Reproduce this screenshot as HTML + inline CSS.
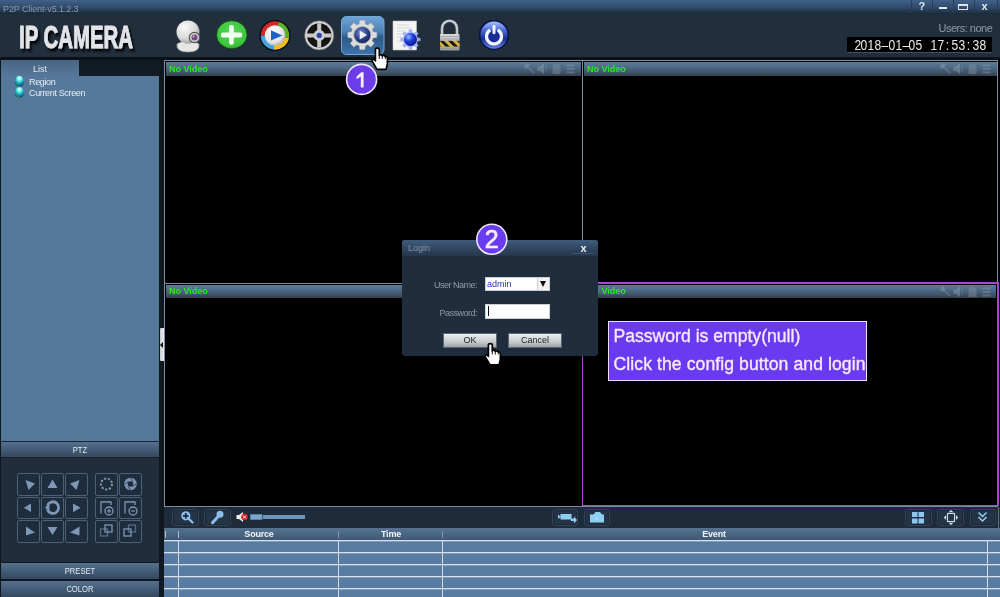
<!DOCTYPE html>
<html><head><meta charset="utf-8">
<style>
*{margin:0;padding:0;box-sizing:border-box}
html,body{width:1000px;height:597px;overflow:hidden;background:#1b2838;font-family:"Liberation Sans",sans-serif}
body{will-change:transform}
.a{position:absolute}
#title{left:0;top:0;width:1000px;height:14px;background:linear-gradient(#40618a,#2f4a6a 55%,#23374e 82%,#1b2939)}
#title .t{left:3px;top:4px;font-size:9px;line-height:10px;color:#8c9aaa;letter-spacing:-0.1px}
.wsep{top:0;width:1px;height:13px;background:#2a3f57}
#hdr{left:0;top:14px;width:1000px;height:43px;background:#212e3c}
#blk{left:0;top:57px;width:1000px;height:3px;background:#0b1118}
#logo{left:19px;top:19px;font-size:31px;font-weight:bold;color:#e4e6ea;transform:scaleX(0.655);transform-origin:0 0;text-shadow:2px 2px 2px #000;line-height:34px;letter-spacing:0.5px}
#users{left:938.5px;top:22px;font-size:11px;color:#8e9aa8;letter-spacing:-0.5px;line-height:13px}
#clock{left:847px;top:37px;width:145px;height:16px;background:#000;border-bottom:1px solid #3b4e63}
#clock span{position:absolute;top:0;width:7px;text-align:center;color:#ececec;font-size:14px;line-height:16.5px;transform:scaleX(0.86)}
#left{left:0;top:60px;width:164px;height:537px;background:#0f1820}
#tab{left:1px;top:60px;width:78px;height:16px;background:linear-gradient(#4a6482,#56779a);color:#dfe6ee;font-size:9px;text-align:center;line-height:18px}
#tabr{left:79px;top:60px;width:80px;height:16px;background:#121a23}
#list{left:1px;top:76px;width:158px;height:365px;background:#56789b}
#list .it{left:28px;font-size:9px;color:#e8eef4;letter-spacing:-0.35px}
.bar{left:1px;width:158px;background:linear-gradient(#56728f,#435c77 50%,#34495f);color:#e4e9ef;font-size:9.5px;text-align:center}
.bar span{display:inline-block;transform:scaleX(0.8)}
#ptzbody{left:1px;top:458px;width:158px;height:104px;background:#202d3c}
.pb{position:absolute;width:23px;height:22px;border:1px solid #4d6680;border-radius:2px;background:#1f2c3b}
#vid{left:164px;top:60px;width:836px;height:447px;background:#000}
.vl{background:#7d8aa0}
.ph{position:absolute;height:14px;background:linear-gradient(#5a7c98,#4f6b89 35%,#405669 72%,#343f4c);color:#2ae82a;font-size:9px;font-weight:bold;padding-left:3px;line-height:14px}
#tb{left:164px;top:507px;width:836px;height:21px;background:#1e2b3a}
.tbb{position:absolute;top:509px;width:27px;height:16.5px;border-radius:3px;background:#243345;border:1px solid #304357;box-shadow:inset 0 0 0 1px #1c2836}
#tbl{left:164px;top:528px;width:836px;height:69px;background:#587ba1}
#th{left:164px;top:528px;width:836px;height:12px;background:linear-gradient(#567391,#3f5872);color:#f0f3f6;font-size:9px;font-weight:bold}
.hl{position:absolute;left:164px;width:836px;height:2px;background:linear-gradient(#d4e2ef 50%,#7f9cba 50%)}
.cl{position:absolute;top:540px;width:1px;height:57px;background:#d0dfee}
.circ{border-radius:50%;background:#6a35e6;border:2px solid #efe4ff;color:#fff;font-weight:bold;text-align:center}
</style></head><body>
<div id="title" class="a"><div class="t a">P2P Client-v5.1.2.3</div>
  <div class="wsep a" style="left:911px"></div><div class="wsep a" style="left:932px"></div><div class="wsep a" style="left:953px"></div><div class="wsep a" style="left:974px"></div><div class="wsep a" style="left:997px"></div>
  <div class="a" style="left:918.5px;top:0;font-size:11px;font-weight:bold;color:#dfe6ee;line-height:13px">?</div>
  <div class="a" style="left:938.5px;top:6.5px;width:8px;height:2px;background:#e2e8ee"></div>
  <div class="a" style="left:958px;top:3.5px;width:10px;height:6.5px;border:2px solid #dfe6ee;border-width:2px 1px 1px 1px"></div>
  <div class="a" style="left:981.5px;top:0px;font-size:11px;font-weight:bold;color:#e2e8ee;line-height:13px">x</div>
</div>
<div id="hdr" class="a"></div>
<div id="blk" class="a"></div>
<svg class="a" style="left:0;top:14px" width="160" height="43" viewBox="0 14 160 43"><defs><filter id="fs" x="-10%" y="-10%" width="130%" height="140%"><feGaussianBlur in="SourceAlpha" stdDeviation="1.2"/><feOffset dx="2" dy="2.5"/><feComponentTransfer><feFuncA type="linear" slope="0.9"/></feComponentTransfer><feMerge><feMergeNode/><feMergeNode in="SourceGraphic"/></feMerge></filter></defs>
<text x="19" y="47.8" font-family="Liberation Sans" font-weight="bold" font-size="31" textLength="114" lengthAdjust="spacingAndGlyphs" fill="#e2e4e8" stroke="#e2e4e8" stroke-width="0.9" filter="url(#fs)">IP CAMERA</text></svg>
<div id="users" class="a">Users: none</div>
<div id="clock" class="a"><span style="left:6.60px">2</span><span style="left:13.45px">0</span><span style="left:20.30px">1</span><span style="left:27.15px">8</span><span style="left:34.00px">–</span><span style="left:40.85px">0</span><span style="left:47.70px">1</span><span style="left:54.55px">–</span><span style="left:61.40px">0</span><span style="left:68.25px">5</span><span style="left:83.40px">1</span><span style="left:90.35px">7</span><span style="left:97.30px">:</span><span style="left:104.25px">5</span><span style="left:111.20px">3</span><span style="left:118.15px">:</span><span style="left:125.10px">3</span><span style="left:132.05px">8</span></div>

<!-- LEFT PANEL -->
<div id="left" class="a"></div>
<div id="tab" class="a">List</div>
<div id="tabr" class="a"></div>
<div id="list" class="a">
  <div class="it a" style="top:1px">Region</div>
  <div class="it a" style="top:12px">Current Screen</div>
</div>
<div class="a" style="left:0;top:441px;width:160px;height:1px;background:#1a2633"></div>
<div class="bar a" style="top:442px;height:16px;line-height:15px;border-bottom:1px solid #17222d"><span>PTZ</span></div>
<div id="ptzbody" class="a"></div>
<div class="bar a" style="top:563px;height:16px;line-height:16.5px"><span>PRESET</span></div>
<div class="bar a" style="top:581px;height:16px;line-height:16px"><span>COLOR</span></div>

<!-- VIDEO -->
<div class="a" style="left:160px;top:328px;width:3.5px;height:33px;background:linear-gradient(90deg,#c8ccd2,#eef0f2);border-radius:1px 0 0 1px"></div>
<div class="a" style="left:160px;top:342px;width:0;height:0;border-top:3px solid transparent;border-bottom:3px solid transparent;border-right:3px solid #111"></div>
<div id="vid" class="a"></div>
<div class="vl a" style="left:164px;top:60px;width:834px;height:1px"></div>
<div class="vl a" style="left:164px;top:60px;width:1px;height:447px"></div>
<div class="vl a" style="left:582px;top:60px;width:1px;height:223px"></div>
<div class="vl a" style="left:997px;top:60px;width:1px;height:223px"></div>
<div class="vl a" style="left:164px;top:283px;width:418px;height:1px"></div>
<div class="vl a" style="left:164px;top:506px;width:834px;height:1px"></div>
<div class="ph" style="left:166px;top:62px;width:415px">No Video</div>
<div class="ph" style="left:584px;top:62px;width:413px">No Video</div>
<div class="ph" style="left:166px;top:285px;width:415px;height:13px;line-height:13px">No Video</div>
<div class="a" style="left:582px;top:282px;width:417px;height:224px;border:1px solid #a946cc;border-width:2px 2px 1px 1px"></div>
<div class="ph" style="left:584px;top:285px;width:412px;height:13px;line-height:13px">No Video</div>

<svg class="a" style="left:0;top:0" width="1000" height="597" viewBox="0 0 1000 597"><g transform="translate(580,62)" opacity="0.4">
<circle cx="-53.2" cy="4" r="2.4" fill="#9aa8b6"/><line x1="-52" y1="5.5" x2="-46" y2="11" stroke="#8a98a6" stroke-width="1.6"/>
<path d="M-42.5 4.5 h2.5 l4 -3 v10.5 l-4 -3 h-2.5z" fill="#9aa8b6"/><path d="M-34.5 3.5 q2 3 0 6" fill="none" stroke="#9aa8b6" stroke-width="0.8"/>
<path d="M-27.5 12 v-6 a4 4 0 0 1 8 0 v6z" fill="#8896a4"/>
<g fill="#8d9baa"><rect x="-13.5" y="2.5" width="8" height="2"/><rect x="-13.5" y="6" width="8" height="2"/><rect x="-13.5" y="9.5" width="8" height="2"/></g>
</g><g transform="translate(996,62)" opacity="0.4">
<circle cx="-53.2" cy="4" r="2.4" fill="#9aa8b6"/><line x1="-52" y1="5.5" x2="-46" y2="11" stroke="#8a98a6" stroke-width="1.6"/>
<path d="M-42.5 4.5 h2.5 l4 -3 v10.5 l-4 -3 h-2.5z" fill="#9aa8b6"/><path d="M-34.5 3.5 q2 3 0 6" fill="none" stroke="#9aa8b6" stroke-width="0.8"/>
<path d="M-27.5 12 v-6 a4 4 0 0 1 8 0 v6z" fill="#8896a4"/>
<g fill="#8d9baa"><rect x="-13.5" y="2.5" width="8" height="2"/><rect x="-13.5" y="6" width="8" height="2"/><rect x="-13.5" y="9.5" width="8" height="2"/></g>
</g><g transform="translate(580,285)" opacity="0.4">
<circle cx="-53.2" cy="4" r="2.4" fill="#9aa8b6"/><line x1="-52" y1="5.5" x2="-46" y2="11" stroke="#8a98a6" stroke-width="1.6"/>
<path d="M-42.5 4.5 h2.5 l4 -3 v10.5 l-4 -3 h-2.5z" fill="#9aa8b6"/><path d="M-34.5 3.5 q2 3 0 6" fill="none" stroke="#9aa8b6" stroke-width="0.8"/>
<path d="M-27.5 12 v-6 a4 4 0 0 1 8 0 v6z" fill="#8896a4"/>
<g fill="#8d9baa"><rect x="-13.5" y="2.5" width="8" height="2"/><rect x="-13.5" y="6" width="8" height="2"/><rect x="-13.5" y="9.5" width="8" height="2"/></g>
</g><g transform="translate(996,285)" opacity="0.4">
<circle cx="-53.2" cy="4" r="2.4" fill="#9aa8b6"/><line x1="-52" y1="5.5" x2="-46" y2="11" stroke="#8a98a6" stroke-width="1.6"/>
<path d="M-42.5 4.5 h2.5 l4 -3 v10.5 l-4 -3 h-2.5z" fill="#9aa8b6"/><path d="M-34.5 3.5 q2 3 0 6" fill="none" stroke="#9aa8b6" stroke-width="0.8"/>
<path d="M-27.5 12 v-6 a4 4 0 0 1 8 0 v6z" fill="#8896a4"/>
<g fill="#8d9baa"><rect x="-13.5" y="2.5" width="8" height="2"/><rect x="-13.5" y="6" width="8" height="2"/><rect x="-13.5" y="9.5" width="8" height="2"/></g>
</g></svg>
<!-- BOTTOM -->
<div id="tb" class="a"></div>
<div class="tbb" style="left:172px"></div>
<div class="tbb" style="left:204px"></div>
<div class="tbb" style="left:551.5px;width:26px"></div>
<div class="tbb" style="left:583.5px;width:26px"></div>
<div class="tbb" style="left:905px;width:27px"></div>
<div class="tbb" style="left:937px;width:27px"></div>
<div class="tbb" style="left:969.5px;width:26.5px"></div>
<div class="a" style="left:998px;top:507px;width:1px;height:21px;background:#5d7186"></div>
<div id="tbl" class="a"></div>
<div id="th" class="a"></div>
<div class="a" style="left:244px;top:529px;width:30px;text-align:center;font-size:9px;font-weight:bold;color:#f2f5f8;line-height:11px;letter-spacing:-0.2px">Source</div>
<div class="a" style="left:376px;top:529px;width:30px;text-align:center;font-size:9px;font-weight:bold;color:#f2f5f8;line-height:11px;letter-spacing:-0.2px">Time</div>
<div class="a" style="left:699px;top:529px;width:30px;text-align:center;font-size:9px;font-weight:bold;color:#f2f5f8;line-height:11px;letter-spacing:-0.2px">Event</div>
<div class="a" style="left:165px;top:531px;width:1px;height:7px;background:#a9bdd0"></div>
<div class="a" style="left:178px;top:531px;width:1px;height:7px;background:#a9bdd0"></div>
<div class="a" style="left:338px;top:531px;width:1px;height:7px;background:#7f97ae"></div>
<div class="a" style="left:442px;top:531px;width:1px;height:7px;background:#7f97ae"></div>
<div class="hl" style="top:540px"></div>
<div class="hl" style="top:552px"></div>
<div class="hl" style="top:564px"></div>
<div class="hl" style="top:576px"></div>
<div class="hl" style="top:588px"></div>
<div class="cl" style="left:178px"></div>
<div class="cl" style="left:338px"></div>
<div class="cl" style="left:442px"></div>
<div class="cl" style="left:987px"></div>

<!-- INFO BOX -->
<div class="a" style="left:608px;top:321px;width:259px;height:60px;background:#6a3af0;border:1.5px solid #efe0ff"></div>
<div class="a" style="left:613.5px;top:325.5px;font-size:17.6px;color:#f6e9ff;line-height:20px;-webkit-text-stroke:0.35px #f6e9ff">Password is empty(null)</div>
<div class="a" style="left:613.5px;top:354px;font-size:17.6px;color:#f6e9ff;line-height:20px;-webkit-text-stroke:0.35px #f6e9ff;letter-spacing:0.08px">Click the config button and login</div>

<!-- DIALOG -->
<div class="a" style="left:402px;top:240px;width:196px;height:116px;background:#1f2c3b;border-radius:3px"></div>
<div class="a" style="left:402px;top:240px;width:196px;height:16px;background:linear-gradient(#405c7c,#2e445e 60%,#24364a);border-radius:3px 3px 0 0"></div>
<div class="a" style="left:408px;top:243px;font-size:9px;color:#8796a8;line-height:10px">Login</div>
<div class="a" style="left:580.5px;top:241.5px;font-size:11px;font-weight:bold;color:#f0f2f5;line-height:12px">x</div>
<div class="a" style="left:572px;top:253px;width:22px;height:1px;background:#3e546c"></div>
<div class="a" style="left:403px;top:256px;width:194px;height:99px;background:#1f2d3c"></div>
<div class="a" style="left:420px;top:280px;width:57px;text-align:right;font-size:9px;color:#8e9aa8;line-height:10px;letter-spacing:-0.5px">User Name:</div>
<div class="a" style="left:420px;top:308px;width:57px;text-align:right;font-size:9px;color:#8e9aa8;line-height:10px;letter-spacing:-0.5px">Password:</div>
<div class="a" style="left:485px;top:277px;width:65px;height:14px;background:#fff;border:1px solid #c8d0d8"></div>
<div class="a" style="left:487px;top:279px;font-size:9px;color:#3030c8;line-height:10px">admin</div>
<div class="a" style="left:537px;top:278px;width:12px;height:12px;background:#f2f2f2;border-left:1px solid #d0d0d0"></div>
<div class="a" style="left:539.5px;top:281px;width:0;height:0;border-left:3.5px solid transparent;border-right:3.5px solid transparent;border-top:6px solid #111"></div>
<div class="a" style="left:485px;top:304px;width:65px;height:15px;background:#fff;border:1px solid #c8d0d8"></div>
<div class="a" style="left:488px;top:306px;width:1px;height:10px;background:#111"></div>
<div class="a" style="left:443px;top:333px;width:54px;height:15px;background:linear-gradient(#eceef0,#c8ccd0 60%,#9ea3a8);border:1px solid #5d6670;font-size:9px;color:#222;text-align:center;line-height:13px">OK</div>
<div class="a" style="left:508px;top:333px;width:54px;height:15px;background:linear-gradient(#eceef0,#c8ccd0 60%,#9ea3a8);border:1px solid #5d6670;font-size:9px;color:#222;text-align:center;line-height:13px">Cancel</div>




<svg class="a" style="left:0;top:0" width="1000" height="597" viewBox="0 0 1000 597">
<defs>
 <radialGradient id="gWeb" cx="0.35" cy="0.3" r="0.8"><stop offset="0" stop-color="#fafafa"/><stop offset="0.6" stop-color="#d9d9d9"/><stop offset="1" stop-color="#8f8f8f"/></radialGradient>
 <radialGradient id="gGreen" cx="0.5" cy="0.4" r="0.6"><stop offset="0" stop-color="#55d855"/><stop offset="0.85" stop-color="#3cc43c"/><stop offset="1" stop-color="#2a8a2a"/></radialGradient>
 <radialGradient id="gWhite" cx="0.4" cy="0.35" r="0.7"><stop offset="0" stop-color="#ffffff"/><stop offset="0.7" stop-color="#e4e4e4"/><stop offset="1" stop-color="#a8a8a8"/></radialGradient>
 <linearGradient id="gSel" x1="0" y1="0" x2="0" y2="1"><stop offset="0" stop-color="#6ea4d8"/><stop offset="0.42" stop-color="#4b7fb2"/><stop offset="0.55" stop-color="#2c5a88"/><stop offset="1" stop-color="#3f74aa"/></linearGradient>
 <radialGradient id="gNavy" cx="0.4" cy="0.35" r="0.7"><stop offset="0" stop-color="#6a8ad0"/><stop offset="0.6" stop-color="#2a3f80"/><stop offset="1" stop-color="#141f50"/></radialGradient>
 <radialGradient id="gBall" cx="0.35" cy="0.3" r="0.7"><stop offset="0" stop-color="#9ab8ff"/><stop offset="0.5" stop-color="#1f3fe0"/><stop offset="1" stop-color="#0a1a90"/></radialGradient>
 <radialGradient id="gPow" cx="0.5" cy="0.3" r="0.75"><stop offset="0" stop-color="#7fa6f0"/><stop offset="0.55" stop-color="#2c55c0"/><stop offset="1" stop-color="#122a78"/></radialGradient>
 <linearGradient id="gLock" x1="0" y1="0" x2="0" y2="1"><stop offset="0" stop-color="#d8d8d8"/><stop offset="1" stop-color="#9a9a9a"/></linearGradient>
 <pattern id="pStripe" width="6" height="6" patternUnits="userSpaceOnUse" patternTransform="rotate(-45)"><rect width="6" height="6" fill="#d8b040"/><rect width="3" height="6" fill="#1a1a1a"/></pattern>
</defs>
<!-- webcam -->
<path d="M177 44 Q176 52 188 52 Q200 52 199 44 Q195 41 188 41 Q181 41 177 44Z" fill="#e6e6e6" stroke="#9a9a9a" stroke-width="0.8"/>
<circle cx="188" cy="32" r="11.5" fill="url(#gWeb)"/>
<circle cx="194.5" cy="37.5" r="5.2" fill="#d0d0d0" stroke="#555" stroke-width="1.2"/>
<circle cx="194.5" cy="37.5" r="3" fill="#6e4a80"/>
<circle cx="193.5" cy="36.5" r="1" fill="#c9b4d8"/>
<!-- green plus -->
<ellipse cx="231.8" cy="34.8" rx="15.4" ry="14.2" fill="url(#gGreen)" stroke="#0e3a14" stroke-width="0.9"/>
<rect x="220.8" y="32.6" width="21.3" height="5" rx="2" fill="#f0fff0"/>
<rect x="229.1" y="25" width="4.7" height="19.8" rx="2" fill="#f0fff0"/>
<!-- media player -->
<circle cx="275" cy="35.5" r="15.6" fill="#0d0d0d"/>
<path d="M275 35.5 L260.80 35.50 A14.2 14.2 0 0 1 278.68 21.78 Z" fill="#d42828"/><path d="M275 35.5 L278.68 21.78 A14.2 14.2 0 0 1 288.98 37.97 Z" fill="#58b02c"/><path d="M275 35.5 L288.98 37.97 A14.2 14.2 0 0 1 273.76 49.65 Z" fill="#f0c020"/><path d="M275 35.5 L273.76 49.65 A14.2 14.2 0 0 1 260.80 35.50 Z" fill="#46a4e0"/>
<circle cx="275" cy="35.5" r="10.3" fill="url(#gWhite)"/>
<path d="M271 30.2 L282.3 35.4 L271 40.6 Z" fill="#1d63c8"/>
<!-- film reel -->
<circle cx="319.2" cy="35.4" r="14.6" fill="#d4d4d4" stroke="#5a5a5a" stroke-width="0.6"/>
<circle cx="319.2" cy="35.4" r="12.2" fill="#141414"/>
<path d="M317.2 23.2 h4 v10.2 h10.2 v4 h-10.2 v10.2 h-4 v-10.2 h-10.2 v-4 h10.2z" fill="#c8c8c8"/>
<circle cx="319.2" cy="35.4" r="5.6" fill="#cdcdcd"/>
<circle cx="319.2" cy="35.4" r="2.6" fill="#2c44b0"/>
<!-- selected config button -->
<rect x="341.5" y="16.5" width="42.5" height="38" rx="5" fill="url(#gSel)" stroke="#74a8d8" stroke-width="1"/>
<g transform="translate(362.3,35)">
<path d="M-2.88 -10.82 L-2.47 -14.39 L2.47 -14.39 L2.88 -10.82 L5.57 -9.72 L5.62 -9.69 L8.43 -11.92 L11.92 -8.43 L9.69 -5.62 L10.81 -2.94 L10.82 -2.88 L14.39 -2.47 L14.39 2.47 L10.82 2.88 L9.72 5.57 L9.69 5.62 L11.92 8.43 L8.43 11.92 L5.62 9.69 L2.94 10.81 L2.88 10.82 L2.47 14.39 L-2.47 14.39 L-2.88 10.82 L-5.57 9.72 L-5.62 9.69 L-8.43 11.92 L-11.92 8.43 L-9.69 5.62 L-10.81 2.94 L-10.82 2.88 L-14.39 2.47 L-14.39 -2.47 L-10.82 -2.88 L-9.72 -5.57 L-9.69 -5.62 L-11.92 -8.43 L-8.43 -11.92 L-5.62 -9.69 L-2.94 -10.81Z" fill="#dcdcd8" stroke="#c8c8c4" stroke-width="0.5" stroke-linejoin="round"/>
<circle r="8.6" fill="url(#gNavy)" stroke="#b8bcc8" stroke-width="0.8"/>
<path d="M-2.6 -4.6 L4.8 0 L-2.6 4.6 Z" fill="#eef0f8"/>
</g>
<!-- document -->
<path d="M393 21 h23.5 v29 h-23.5z" fill="#f4f4f2" stroke="#c8c8c8" stroke-width="0.6"/>
<g stroke="#c4c8d0" stroke-width="0.6"><line x1="397" y1="25" x2="409" y2="25"/><line x1="397" y1="28" x2="411" y2="28"/><line x1="397" y1="31" x2="405" y2="31"/><line x1="397" y1="34" x2="403" y2="34"/><line x1="397" y1="37" x2="402" y2="37"/><line x1="397" y1="41" x2="402" y2="41"/></g>
<path d="M417.62 37.91 L420.22 38.23 L420.22 40.77 L417.62 41.09 L417.25 42.28 L416.66 43.41 L418.27 45.47 L416.47 47.27 L414.41 45.66 L413.31 46.24 L412.09 46.62 L411.77 49.22 L409.23 49.22 L408.91 46.62 L407.72 46.25 L406.59 45.66 L404.53 47.27 L402.73 45.47 L404.34 43.41 L403.76 42.31 L403.38 41.09 L400.78 40.77 L400.78 38.23 L403.38 37.91 L403.75 36.72 L404.34 35.59 L402.73 33.53 L404.53 31.73 L406.59 33.34 L407.69 32.76 L408.91 32.38 L409.23 29.78 L411.77 29.78 L412.09 32.38 L413.28 32.75 L414.41 33.34 L416.47 31.73 L418.27 33.53 L416.66 35.59 L417.24 36.69Z" fill="#aab4ee" stroke="#8a96d8" stroke-width="0.5"/>
<circle cx="410.5" cy="39.5" r="6.5" fill="url(#gBall)"/>
<!-- lock -->
<path d="M442 35 V28.5 A7.5 7.8 0 0 1 457 28.5 V35" fill="none" stroke="#c4c8cb" stroke-width="2.6"/>
<rect x="440" y="34" width="19.5" height="16.5" rx="1" fill="url(#gLock)"/>
<rect x="440" y="40.8" width="19.5" height="5.8" fill="url(#pStripe)"/>
<g stroke="#8e9296" stroke-width="0.6"><line x1="440" y1="36.5" x2="459.5" y2="36.5"/><line x1="440" y1="39" x2="459.5" y2="39"/><line x1="440" y1="48.5" x2="459.5" y2="48.5"/></g>
<!-- power -->
<defs><linearGradient id="gPow2" x1="0" y1="0" x2="0" y2="1"><stop offset="0" stop-color="#b4c8ff"/><stop offset="0.3" stop-color="#5272dc"/><stop offset="0.62" stop-color="#1c2e8c"/><stop offset="1" stop-color="#6488f0"/></linearGradient></defs>
<circle cx="494" cy="35.1" r="14.4" fill="url(#gPow2)" stroke="#0a1448" stroke-width="1.6"/>
<circle cx="494" cy="36.5" r="6.3" fill="#1a2c98"/>
<path d="M497.75 30 A7.5 7.5 0 1 1 490.25 30" fill="none" stroke="#f4f6ff" stroke-width="3.2"/>
<rect x="492.5" y="24.8" width="3" height="9.5" rx="1.5" fill="#eef2ff"/>
</svg>

<svg class="a" style="left:0;top:0" width="1000" height="597" viewBox="0 0 1000 597">
<defs>
 <radialGradient id="gGlobe" cx="0.5" cy="0.28" r="0.75" fx="0.5" fy="0.2"><stop offset="0" stop-color="#f0fff8"/><stop offset="0.3" stop-color="#70f0e8"/><stop offset="0.6" stop-color="#1aa8c0"/><stop offset="0.85" stop-color="#0b5a8e"/><stop offset="1" stop-color="#0a4070"/></radialGradient>
</defs>
<!-- list icons -->
<path d="M19.4 75.8 C22.5 75.8 24 79.5 24 82 C24 85 22 86.6 19.4 86.6 C16.8 86.6 14.8 85 14.8 82 C14.8 79.5 16.3 75.8 19.4 75.8Z" fill="url(#gGlobe)"/>
<path d="M15.5 84 Q17 86.5 20 86.4 Q18 85 17.5 83Z" fill="#22a040" opacity="0.8"/>
<path d="M19.4 87 C22.5 87 24 90.5 24 93 C24 96 22 97.6 19.4 97.6 C16.8 97.6 14.8 96 14.8 93 C14.8 90.5 16.3 87 19.4 87Z" fill="url(#gGlobe)"/>
<path d="M15.5 95 Q17 97.5 20 97.4 Q18 96 17.5 94Z" fill="#22a040" opacity="0.8"/>
<!-- PTZ buttons -->
<g fill="#1f2c3b" stroke="#4a6279" stroke-width="1">
 <rect x="17.5" y="473.5" width="22" height="22" rx="1.5"/><rect x="41.5" y="473.5" width="22" height="22" rx="1.5"/><rect x="65.5" y="473.5" width="22" height="22" rx="1.5"/>
 <rect x="17.5" y="497.5" width="22" height="21" rx="1.5"/><rect x="41.5" y="497.5" width="22" height="21" rx="1.5"/><rect x="65.5" y="497.5" width="22" height="21" rx="1.5"/>
 <rect x="17.5" y="520.5" width="22" height="22" rx="1.5"/><rect x="41.5" y="520.5" width="22" height="22" rx="1.5"/><rect x="65.5" y="520.5" width="22" height="22" rx="1.5"/>
 <rect x="95.5" y="473.5" width="22" height="22" rx="1.5"/><rect x="119.5" y="473.5" width="22" height="22" rx="1.5"/>
 <rect x="95.5" y="497.5" width="22" height="21" rx="1.5"/><rect x="119.5" y="497.5" width="22" height="21" rx="1.5"/>
 <rect x="95.5" y="520.5" width="22" height="22" rx="1.5"/><rect x="119.5" y="520.5" width="22" height="22" rx="1.5"/>
</g>
<g fill="#7d97b6">
 <path d="M25.5 480 L35 483.5 L28.5 490 Z"/>
 <path d="M52.5 479.5 L57.5 488 L47.5 488 Z"/>
 <path d="M79.5 480 L70 483.5 L76.5 490 Z"/>
 <path d="M23.8 507.8 L31 503.6 L31 512 Z"/>
 <path d="M80.6 507.8 L73 503.4 L73 512.2 Z"/>
 <path d="M26 526.5 L35 532.5 L26 535.5 Z"/>
 <path d="M47.5 527 L57.5 527 L52.5 535 Z"/>
 <path d="M79.5 526.5 L70 532.5 L79.5 535.5 Z"/>
</g>
<path d="M47.35 505.62 A5.8 5.8 0 1 1 47.35 509.58" fill="none" stroke="#7d97b6" stroke-width="2.8"/>
<path d="M44.8 507.8 L49.5 503.5 L49.5 511 Z" fill="#7d97b6"/>
<circle cx="106.5" cy="484" r="5.5" fill="none" stroke="#7d97b6" stroke-width="2" stroke-dasharray="2.2 1.6"/>
<circle cx="130.5" cy="484" r="6.2" fill="#7d97b6"/>
<circle cx="130.5" cy="484" r="2.8" fill="#1f2c3b"/>
<g stroke="#1f2c3b" stroke-width="0.8"><line x1="130.5" y1="478" x2="133" y2="481.5"/><line x1="136" y1="484" x2="132.5" y2="486.5"/><line x1="130.5" y1="490" x2="128" y2="486.5"/><line x1="125" y1="484" x2="128.5" y2="481.5"/></g>
<g fill="none" stroke="#7d97b6" stroke-width="1.3">
 <path d="M101 513.5 V502 H111 V505"/><circle cx="109" cy="511" r="4"/>
 <path d="M125 513.5 V502 H135 V505"/><circle cx="133" cy="511" r="4"/>
 <rect x="105" y="525" width="7" height="7"/><rect x="100.5" y="529" width="7" height="7" stroke-opacity="0.6"/>
 <rect x="128.5" y="525" width="7" height="7" stroke-opacity="0.6"/><rect x="124" y="529" width="7" height="7"/>
</g>
<g stroke="#7d97b6" stroke-width="1.2"><line x1="107" y1="511" x2="111" y2="511"/><line x1="109" y1="509" x2="109" y2="513"/><line x1="131" y1="511" x2="135" y2="511"/></g>

<!-- toolbar icons -->
<circle cx="185.8" cy="515.8" r="4.6" fill="#8cbeee"/>
<path d="M183 515.8 h5.6 M185.8 513 v5.6" stroke="#16243a" stroke-width="1.8"/>
<line x1="189" y1="519" x2="192.5" y2="522.5" stroke="#8cbeee" stroke-width="2.4" stroke-linecap="round"/>
<line x1="212.5" y1="522.8" x2="218" y2="516.8" stroke="#8cbeee" stroke-width="3" stroke-linecap="round"/>
<circle cx="220" cy="514.3" r="3.5" fill="#8cbeee"/>
<path d="M236.5 515 h2.5 l4 -3 v10 l-4 -3 h-2.5z" fill="#eee"/>
<circle cx="244.5" cy="517" r="3.3" fill="#d82020"/>
<path d="M243 515.5 l3 3 M246 515.5 l-3 3" stroke="#fff" stroke-width="0.9"/>
<rect x="262" y="515" width="43" height="4" fill="#6f93b8"/>
<rect x="250" y="514" width="12.5" height="6" fill="#7aa6d2" stroke="#1a2a3a" stroke-width="0.6"/>
<path d="M558 514.5 l2.5 2 v-2.5 h11 v4.5 h2.5 v-2 l3 3.5 -3 3.5 v-2.5 h-3 v-1.5 h-10.5 v-2.5 l-2.5 2z" fill="#8ccff0"/>
<path d="M590 514.5 h3.5 l2 -2.5 h4.5 l2 2.5 h2 v8 h-14z" fill="#8ccff0"/>
<path d="M595 520 l1.5 -3 l1.5 3" fill="none" stroke="#b8e4fa" stroke-width="0.8"/>
<g fill="#8ec6f0"><rect x="912" y="512" width="5.5" height="5"/><rect x="918.5" y="512" width="5.5" height="5"/><rect x="912" y="518.5" width="5.5" height="5"/><rect x="918.5" y="518.5" width="5.5" height="5"/></g>
<rect x="947.5" y="513.5" width="7" height="8" fill="none" stroke="#d0dcea" stroke-width="1.1"/>
<g fill="#d0dcea"><path d="M951 510 l2.5 2.3 h-5z"/><path d="M951 525 l2.5 -2.3 h-5z"/><path d="M943.8 517.5 l2.3 -2.5 v5z"/><path d="M958.2 517.5 l-2.3 -2.5 v5z"/></g>
<path d="M978.5 512.5 l4 4 l4 -4 M978.5 517 l4 4 l4 -4" fill="none" stroke="#9cd0f2" stroke-width="1.5"/>

<!-- cursors -->
<g transform="translate(371,47)"><path d="M4.4,2.3 Q4.4,1.1 6.3,1.1 Q8.3,1.1 8.3,2.3 L8.3,8.4 Q8.7,7.7 9.9,7.7 Q11.2,7.7 11.3,8.9 Q11.7,8.5 12.9,8.5 Q14.1,8.5 14.3,9.7 Q14.7,9.4 15.5,9.5 Q16.4,9.7 16.4,11 L16.4,17 L15,22.4 L6,22.4 L1.5,14.6 Q0.7,13 1.9,12.5 Q3.1,12.1 4.4,13.8 Z" fill="#fff" stroke="#000" stroke-width="1.7" stroke-linejoin="round"/><path d="M8.3,8.4 V12 M11.3,8.9 V12 M14.3,9.7 V12" stroke="#000" stroke-width="0.9"/></g>
<g transform="translate(484,342.5)"><path d="M4.4,2.3 Q4.4,1.1 6.3,1.1 Q8.3,1.1 8.3,2.3 L8.3,8.4 Q8.7,7.7 9.9,7.7 Q11.2,7.7 11.3,8.9 Q11.7,8.5 12.9,8.5 Q14.1,8.5 14.3,9.7 Q14.7,9.4 15.5,9.5 Q16.4,9.7 16.4,11 L16.4,17 L15,22.4 L6,22.4 L1.5,14.6 Q0.7,13 1.9,12.5 Q3.1,12.1 4.4,13.8 Z" fill="#fff" stroke="#000" stroke-width="1.7" stroke-linejoin="round"/><path d="M8.3,8.4 V12 M11.3,8.9 V12 M14.3,9.7 V12" stroke="#000" stroke-width="0.9"/></g>
</svg>
<svg class="a" style="left:0;top:0" width="1000" height="597" viewBox="0 0 1000 597">
<circle cx="361.6" cy="79.4" r="15" fill="#6b3ce8" stroke="#efe6ff" stroke-width="1.6"/>
<path d="M356.6 76.6 L361.2 72.2 L363.6 72.2 L363.6 87.6 L360.8 87.6 L360.8 76.4 L356.6 79.2 Z" fill="#f6eeff"/>
<circle cx="491.8" cy="239.3" r="15" fill="#6a3cf0" stroke="#efe6ff" stroke-width="1.6"/>
<text x="491.8" y="247.6" text-anchor="middle" font-family="Liberation Sans" font-size="25" fill="#f6eeff" stroke="#f6eeff" stroke-width="0.7">2</text>
</svg>
</body></html>
